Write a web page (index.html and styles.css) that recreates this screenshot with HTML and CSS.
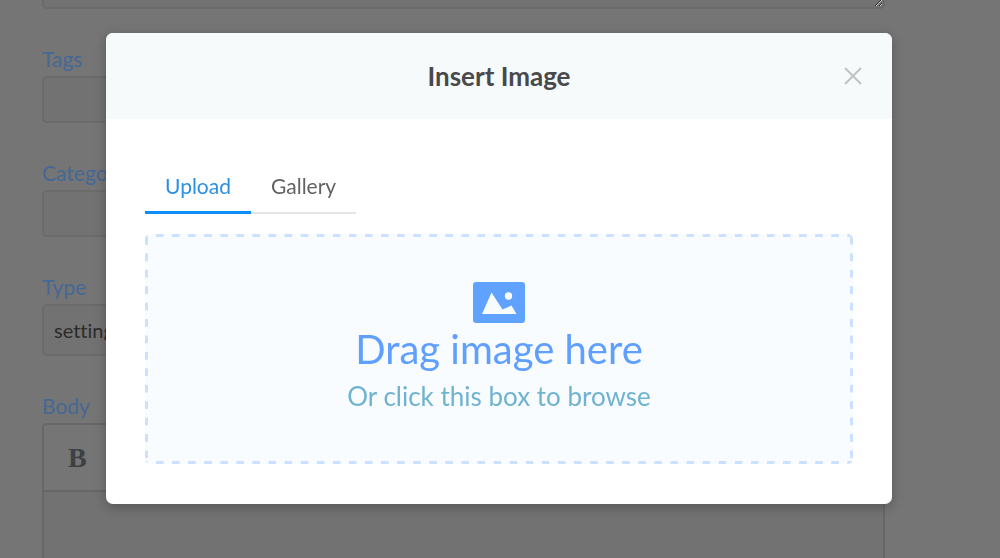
FILE: index.html
```html
<!DOCTYPE html>
<html lang="en">
<head>
<meta charset="utf-8">
<meta name="viewport" content="width=device-width, initial-scale=1">
<title>Insert Image</title>
<link rel="stylesheet" href="styles.css">
</head>
<body>
<form class="post-form">
  <textarea class="field summary" aria-label="Summary"></textarea>
  <div class="group">
    <label class="label" for="tags">Tags</label>
    <input class="field" id="tags" type="text">
  </div>
  <div class="group">
    <label class="label" for="category">Category</label>
    <input class="field" id="category" type="text">
  </div>
  <div class="group">
    <label class="label" for="type">Type</label>
    <select class="field select" id="type"><option>settings</option></select>
  </div>
  <div class="group grow">
    <label class="label" for="body">Body</label>
    <div class="editor">
      <div class="toolbar"><button class="bold" type="button">B</button></div>
      <textarea class="editor-text" id="body"></textarea>
    </div>
  </div>
</form>
<div class="overlay">
  <section class="modal" role="dialog" aria-modal="true" aria-labelledby="modal-title">
    <header class="modal-header">
      <h2 class="modal-title" id="modal-title">Insert Image</h2>
      <button class="close" type="button" aria-label="Close">
        <svg width="18" height="18" viewBox="0 0 18 18" fill="none" stroke="#c0c3c4" stroke-width="2"><path d="M1 1l16 16M17 1l-16 16"/></svg>
      </button>
    </header>
    <div class="modal-body">
      <div class="tabs" role="tablist">
        <button class="tab active" type="button" role="tab" aria-selected="true">Upload</button>
        <button class="tab" type="button" role="tab" aria-selected="false">Gallery</button>
      </div>
      <button class="dropzone" type="button">
        <svg class="picture" width="52" height="41" viewBox="0 0 52 41"><rect width="52" height="41" rx="3" fill="#60a2ff"/><path d="M9 32L18.500 10.500L29.500 27.500L38.500 23.500L43.500 32Z" fill="#f8fcff"/><circle cx="35.500" cy="14" r="3.700" fill="#f8fcff"/></svg>
        <span class="drop-title">Drag image here</span>
        <span class="drop-hint">Or click this box to browse</span>
      </button>
    </div>
  </section>
</div>
</body>
</html>
```
FILE: styles.css
```css
* {
  box-sizing: border-box;
}

body {
  margin: 0;
  background: #757575;
  font-family: Lato, "Open Sans", sans-serif;
  font-variant-ligatures: none;
}

button,
input,
select,
textarea {
  font: inherit;
  font-variant-ligatures: none;
}

.post-form {
  display: flex;
  flex-direction: column;
  height: 100vh;
  padding: 0 115px 0 42px;
}

.group {
  display: flex;
  flex-direction: column;
  flex: none;
  margin-top: 38px;
}

.grow {
  flex: 1;
  min-height: 0;
}

.label {
  margin-bottom: 5px;
  color: #456894;
  font-size: 21px;
  line-height: 24px;
}

.field {
  flex: none;
  width: 100%;
  height: 47px;
  padding: 0 10px;
  border: 2px solid #6b6b6b;
  border-radius: 5px;
  background: #727272;
  color: #2b2b2b;
  font-size: 20px;
}

.summary {
  height: 9px;
  border-top: 0;
  border-radius: 0 0 5px 5px;
}

.select {
  height: 52px;
  appearance: none;
}

.editor {
  display: flex;
  flex-direction: column;
  flex: 1;
  min-height: 0;
  border: 2px solid #676767;
  border-bottom: 0;
  border-radius: 5px 5px 0 0;
}

.toolbar {
  flex: none;
  padding: 17px 24px 16px;
  border-bottom: 2px solid #676767;
}

.bold {
  display: block;
  padding: 0;
  border: 0;
  background: none;
  color: #3d4143;
  font-family: "Liberation Serif", serif;
  font-size: 28px;
  font-weight: 700;
  line-height: 32px;
}

.editor-text {
  flex: 1;
  min-height: 0;
  width: 100%;
  border: 0;
  background: #727272;
  resize: none;
}

.overlay {
  position: absolute;
  inset: 0;
  padding: 33px 108px 0 106px;
}

.modal {
  border-radius: 7px;
  background: #fff;
  box-shadow: 0 3px 12px rgba(0, 0, 0, 0.25);
}

.modal-header {
  display: grid;
  grid-template-columns: 1fr auto 1fr;
  align-items: center;
  padding: 27px 30px;
  border-radius: 7px 7px 0 0;
  background: #f6fafb;
}

.modal-title {
  grid-column: 2;
  margin: 0;
  color: #48494b;
  font-size: 26px;
  line-height: 32px;
}

.close {
  display: flex;
  justify-self: end;
  padding: 0;
  border: 0;
  background: none;
}

.modal-body {
  padding: 40px 39px;
}

.tabs {
  display: flex;
  margin-bottom: 20px;
}

.tab {
  padding: 14px 20px 15px;
  border: 0;
  background: none;
  box-shadow: inset 0 -2px #e4e4e4;
  color: #626262;
  font-size: 21px;
  line-height: 26px;
}

.active {
  box-shadow: inset 0 -3px #0d8eff;
  color: #2b8fe2;
}

.dropzone {
  --dash: #cbe1ff;
  display: flex;
  flex-direction: column;
  align-items: center;
  width: 100%;
  padding: 48px 0 52px;
  border: 0;
  border-radius: 5px;
  background:
    linear-gradient(90deg, var(--dash) 50%, transparent 50%) 11px 0 / 16px 3px round no-repeat,
    linear-gradient(90deg, var(--dash) 50%, transparent 50%) 11px 100% / 16px 3px round no-repeat,
    linear-gradient(var(--dash) 50%, transparent 50%) 0 3px / 3px 16px no-repeat round,
    linear-gradient(var(--dash) 50%, transparent 50%) 100% 3px / 3px 16px no-repeat round,
    #f8fcff;
}

.drop-title {
  margin-top: 3px;
  color: #5f9fff;
  font-size: 40px;
  line-height: 46px;
}

.drop-hint {
  margin-top: 8px;
  color: #70b3d1;
  font-size: 26px;
  line-height: 32px;
}
```
